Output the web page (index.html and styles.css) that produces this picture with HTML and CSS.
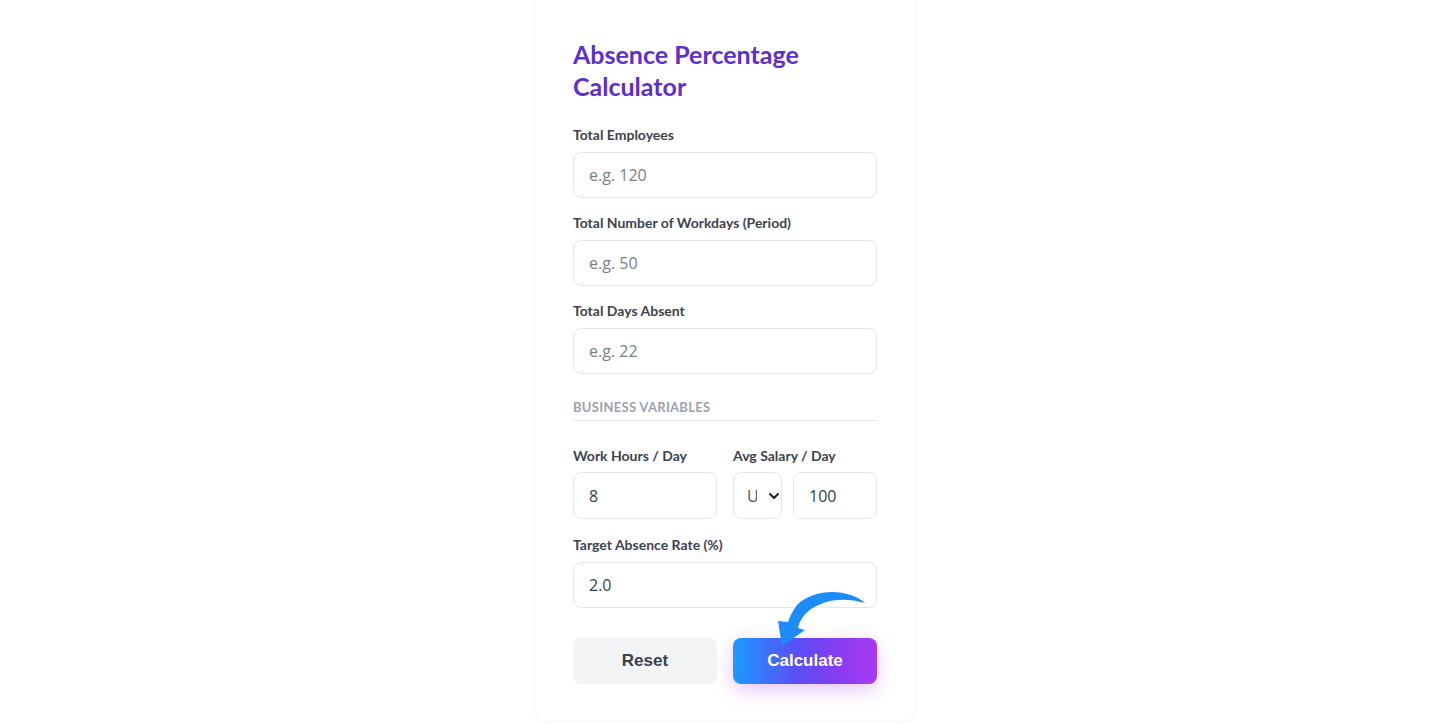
FILE: index.html
```html
<!DOCTYPE html>
<html lang="en">
<head>
<meta charset="utf-8">
<title>Absence Percentage Calculator</title>
<link rel="stylesheet" href="styles.css">
</head>
<body>
<main class="card">
  <h1 class="title">Absence Percentage Calculator</h1>

  <div class="field">
    <label class="label" for="emp">Total Employees</label>
    <input class="input" id="emp" type="text" placeholder="e.g. 120">
  </div>
  <div class="field">
    <label class="label" for="days">Total Number of Workdays (Period)</label>
    <input class="input" id="days" type="text" placeholder="e.g. 50">
  </div>
  <div class="field">
    <label class="label" for="abs">Total Days Absent</label>
    <input class="input" id="abs" type="text" placeholder="e.g. 22">
  </div>

  <div class="section">Business Variables</div>

  <div class="row">
    <div class="field">
      <label class="label" for="hours">Work Hours / Day</label>
      <input class="input" id="hours" type="text" value="8">
    </div>
    <div class="field">
      <label class="label" for="salary">Avg Salary / Day</label>
      <div class="salary">
        <div class="select-wrap">
          <select class="select" aria-label="Currency"><option>USD</option></select>
          <svg class="chev" viewBox="0 0 10 10" width="10" height="10"><path d="M1 3 L5 7 L9 3" fill="none" stroke="#222" stroke-width="2" stroke-linecap="round" stroke-linejoin="round"/></svg>
        </div>
        <input class="input amount" id="salary" type="text" value="100">
      </div>
    </div>
  </div>

  <div class="field">
    <label class="label" for="target">Target Absence Rate (%)</label>
    <input class="input" id="target" type="text" value="2.0">
  </div>

  <div class="actions">
    <button class="btn reset" type="button">Reset</button>
    <button class="btn calc" type="button">Calculate</button>
    <svg class="arrow" viewBox="0 0 100 60" width="100" height="60">
      <path d="M95 15 C80 1 45 -1 27 17 C23 22 20 28 18 34 L8 33 L12 58 L35 42 L28 40 C30 32 34 26 41 21 C56 11 75 9 95 15 Z" fill="#1d8cf8"/>
    </svg>
  </div>
</main>
</body>
</html>
```
FILE: styles.css
```css
* { box-sizing: border-box; }
html, body { margin: 0; padding: 0; background: #ffffff; }
body {
  font-family: Lato, "Noto Sans", sans-serif;
  color: #374151;
  height: 724px;
  overflow: hidden;
}
.card {
  width: 380px;
  margin: -6px auto 0;
  padding: 44px 38px 37px;
  background: #fff;
  border-radius: 14px;
  box-shadow: 0 0 6px rgba(0, 0, 0, 0.06);
}
.title {
  margin: 0 0 23px;
  font-size: 25px;
  line-height: 32px;
  font-weight: 700;
  color: #5b2fd0;
}
.field { display: flex; flex-direction: column; margin-bottom: 15px; }
.label {
  font-size: 14px;
  line-height: 20px;
  font-weight: 700;
  color: #3d4350;
  margin-bottom: 7px;
}
.input {
  height: 46px;
  width: 100%;
  border: 1px solid #e5e7eb;
  border-radius: 8px;
  padding: 0 15px;
  font-family: "Open Sans", "Noto Sans", sans-serif;
  font-size: 16px;
  color: #374151;
  background: #fff;
  outline: none;
}
.input::placeholder { color: #7a7f87; }
.section {
  margin-top: 24px;
  padding-bottom: 4px;
  border-bottom: 1px solid #e5e7eb;
  font-size: 13px;
  line-height: 18px;
  font-weight: 700;
  letter-spacing: 0.3px;
  text-transform: uppercase;
  color: #9ca3af;
  margin-bottom: 25px;
}
.row {
  display: grid;
  grid-template-columns: 144px 144px;
  gap: 16px;
}
.row .field { margin-bottom: 16px; }
.row .label { margin-bottom: 6px; }
.row .input { height: 47px; }
.salary { display: flex; gap: 11px; }
.select-wrap { position: relative; width: 49px; flex: none; }
.select {
  appearance: none;
  -webkit-appearance: none;
  width: 49px;
  height: 47px;
  border: 1px solid #e5e7eb;
  border-radius: 8px;
  background: #fff;
  padding: 0 24px 0 13px;
  font-family: "Open Sans", "Noto Sans", sans-serif;
  font-size: 16px;
  color: #4b5563;
  outline: none;
}
.chev { position: absolute; right: 3px; top: 19px; pointer-events: none; }
.amount { flex: 1; width: auto; min-width: 0; }
.actions {
  position: relative;
  display: grid;
  grid-template-columns: 144px 144px;
  gap: 16px;
  margin-top: 30px;
}
.btn {
  height: 46px;
  border: none;
  border-radius: 8px;
  font-family: "Liberation Sans", Arial, sans-serif;
  font-size: 17px;
  font-weight: 700;
}
.reset { background: #f3f4f6; color: #374151; }
.calc {
  color: #fff;
  background: linear-gradient(90deg, #1a9cff 0%, #5b4df5 45%, #8a3cf2 75%, #a83af4 100%);
  box-shadow: 0 6px 18px rgba(190, 90, 250, 0.35);
}
.arrow { position: absolute; left: 197px; top: -50px; }
```
